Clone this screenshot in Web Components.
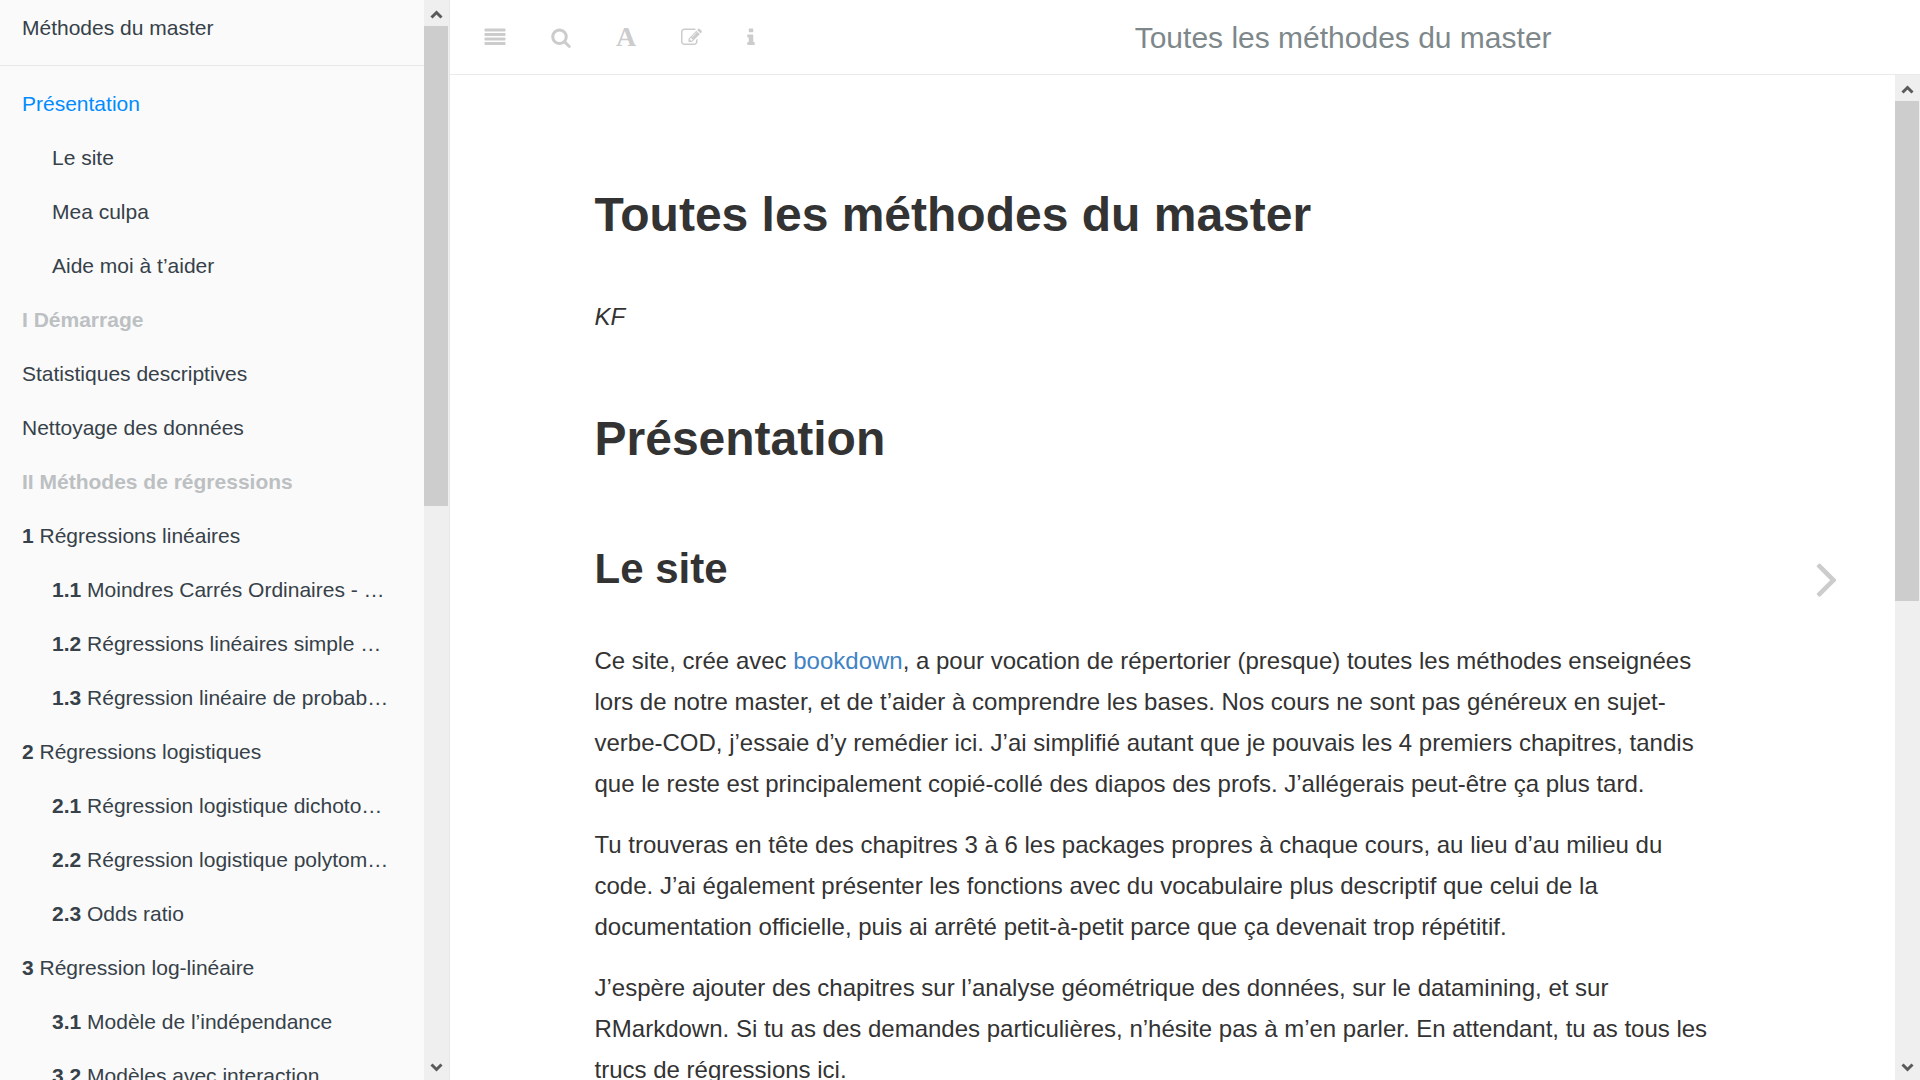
<!DOCTYPE html>
<html lang="fr">
<head>
<meta charset="utf-8">
<title>Toutes les méthodes du master</title>
<style>
  html, body { height: 100%; margin: 0; }
  body { font-family: "Liberation Sans", Arial, sans-serif; color: #333; background: #fff; overflow: hidden; }
</style>
</head>
<body>
<book-app>
  <book-summary slot="summary">
    <summary-item>Méthodes du master</summary-item>
    <summary-divider></summary-divider>
    <summary-item active>Présentation</summary-item>
    <summary-item level="2">Le site</summary-item>
    <summary-item level="2">Mea culpa</summary-item>
    <summary-item level="2">Aide moi à t’aider</summary-item>
    <summary-item part>I Démarrage</summary-item>
    <summary-item>Statistiques descriptives</summary-item>
    <summary-item>Nettoyage des données</summary-item>
    <summary-item part>II Méthodes de régressions</summary-item>
    <summary-item><b>1</b> Régressions linéaires</summary-item>
    <summary-item level="2"><b>1.1</b> Moindres Carrés Ordinaires - …</summary-item>
    <summary-item level="2"><b>1.2</b> Régressions linéaires simple …</summary-item>
    <summary-item level="2"><b>1.3</b> Régression linéaire de probab…</summary-item>
    <summary-item><b>2</b> Régressions logistiques</summary-item>
    <summary-item level="2"><b>2.1</b> Régression logistique dichoto…</summary-item>
    <summary-item level="2"><b>2.2</b> Régression logistique polytom…</summary-item>
    <summary-item level="2"><b>2.3</b> Odds ratio</summary-item>
    <summary-item><b>3</b> Régression log-linéaire</summary-item>
    <summary-item level="2"><b>3.1</b> Modèle de l’indépendance</summary-item>
    <summary-item level="2"><b>3.2</b> Modèles avec interaction</summary-item>
  </book-summary>
  <book-toolbar slot="toolbar">Toutes les méthodes du master</book-toolbar>
  <book-page slot="page"></book-page>
</book-app>

<script>
function define(name, html) {
  const template = document.createElement('template');
  template.innerHTML = html;
  customElements.define(name, class extends HTMLElement {
    constructor() {
      super();
      this.attachShadow({ mode: 'open' }).append(template.content.cloneNode(true));
    }
  });
}

define('book-app', `
  <style>
    :host { display: flex; height: 100vh; }
    .main { flex: 1; min-width: 0; display: flex; flex-direction: column; }
  </style>
  <slot name="summary"></slot>
  <div class="main"><slot name="toolbar"></slot><slot name="page"></slot></div>`);

/* Scroll bar with end arrows; --thumb is the share of the track that the thumb takes. */
define('scroll-rail', `
  <style>
    :host { display: flex; flex-direction: column; flex: none; width: 25px; background: #efefef; }
    svg { display: block; flex: none; width: 25px; height: 26px; fill: none; stroke: #5a5a5a; stroke-width: 3; }
    .track { flex: 1; padding-right: 1px; }
    .thumb { height: var(--thumb, 50%); background: #cdcdcd; }
  </style>
  <svg viewBox="0 0 25 26"><path d="M7.5 17.5l5-5 5 5"/></svg>
  <div class="track"><div class="thumb"></div></div>
  <svg viewBox="0 0 25 26"><path d="M7.5 10.5l5 5 5-5"/></svg>`);

define('book-summary', `
  <style>
    :host { display: flex; flex: none; box-sizing: border-box; width: 450px; background: #fafafa; border-right: 1px solid #e7e7e7; }
    nav { flex: 1; min-width: 0; padding-top: 1px; overflow: hidden; }
    scroll-rail { --thumb: 46.7%; }
  </style>
  <nav><slot></slot></nav>
  <scroll-rail></scroll-rail>`);

define('summary-item', `
  <style>
    :host { display: block; font-size: 21px; line-height: 24px; color: #364149; }
    a { display: block; padding: 15px 22px; color: inherit; text-decoration: none; white-space: nowrap; overflow: hidden; text-overflow: ellipsis; }
    :host([level="2"]) a { padding-left: 52px; }
    :host([active]) { color: #008cff; }
    :host([part]) { color: #bcc0c2; font-weight: bold; }
  </style>
  <a href="#"><slot></slot></a>`);

define('summary-divider', `
  <style>:host { display: block; height: 1px; margin: 10px 0 11px; background: #e7e7e7; }</style>`);

define('book-toolbar', `
  <style>
    :host { display: flex; align-items: stretch; gap: 1px; flex: none; box-sizing: border-box; height: 75px; padding: 0 12px; border-bottom: 1px solid #eaeaea; background: #fff; }
    button { display: flex; align-items: center; margin: 0; padding: 0 22px; border: 0; background: none; color: #ccc; font: 28px/28px "Liberation Serif", serif; cursor: pointer; }
    svg { display: block; height: 21px; fill: currentColor; }
    .letter { font-weight: bold; }
    h1 { flex: 1; margin: 0; text-align: center; font-size: 30px; font-weight: normal; line-height: 75px; color: #7e888b; }
  </style>
  <button aria-label="Sommaire"><svg width="22" viewBox="0 0 1792 1792"><path d="M64 128h1664q64 0 64 64v128q0 64-64 64h-1664q-64 0-64-64v-128q0-64 64-64zM64 512h1664q64 0 64 64v128q0 64-64 64h-1664q-64 0-64-64v-128q0-64 64-64zM64 896h1664q64 0 64 64v128q0 64-64 64h-1664q-64 0-64-64v-128q0-64 64-64zM64 1280h1664q64 0 64 64v128q0 64-64 64h-1664q-64 0-64-64v-128q0-64 64-64z"/></svg></button>
  <button aria-label="Rechercher"><svg width="20" viewBox="64 0 1664 1792"><path d="M1216 832q0-185-131.5-316.5t-316.5-131.5-316.5 131.5-131.5 316.5 131.5 316.5 316.5 131.5 316.5-131.5 131.5-316.5zm512 832q0 52-38 90t-90 38q-54 0-90-38l-343-342q-179 124-399 124-143 0-273.5-55.5t-225-150-150-225-55.5-273.5 55.5-273.5 150-225 225-150 273.5-55.5 273.5 55.5 225 150 150 225 55.5 273.5q0 220-124 399l343 343q37 37 37 90z"/></svg></button>
  <button class="letter" aria-label="Police">A</button>
  <button aria-label="Modifier"><svg width="21" viewBox="0 0 1792 1792"><path d="M888 1184l116-116-152-152-116 116v56h96v96h56zm440-720q-16-16-33 1l-350 350q-17 17-1 33t33-1l350-350q17-17 1-33zm80 594v190q0 119-84.5 203.5t-203.5 84.5h-832q-119 0-203.5-84.5t-84.5-203.5v-832q0-119 84.5-203.5t203.5-84.5h832q63 0 117 25 15 7 18 23 3 17-9 29l-49 49q-14 14-32 8-23-6-45-6h-832q-66 0-113 47t-47 113v832q0 66 47 113t113 47h832q66 0 113-47t47-113v-126q0-13 9-22l64-64q15-15 35-7t20 29zm-96-738l288 288-672 672h-288v-288zm444 132l-92 92-288-288 92-92q28-28 68-28t68 28l152 152q28 28 28 68t-28 68z"/></svg></button>
  <button aria-label="Informations"><svg width="8" viewBox="576 0 640 1792"><path d="M1216 1344v128q0 26-19 45t-45 19h-512q-26 0-45-19t-19-45v-128q0-26 19-45t45-19h64v-384h-64q-26 0-45-19t-19-45v-128q0-26 19-45t45-19h384q26 0 45 19t19 45v576h64q26 0 45 19t19 45zm-128-1152v192q0 26-19 45t-45 19h-256q-26 0-45-19t-19-45v-192q0-26 19-45t45-19h256q26 0 45 19t19 45z"/></svg></button>
  <h1><slot></slot></h1>`);

define('book-page', `
  <style>
    :host { position: relative; display: flex; flex: 1; min-height: 0; }
    main { flex: 1; min-width: 0; overflow: hidden; }
    article { box-sizing: border-box; max-width: 1200px; margin: 0 auto; padding: 99px 52px 0 22px; font-size: 24px; line-height: 41px; }
    h1, h2, p { margin: 0; }
    h1 { font-size: 48px; line-height: 82px; }
    h2 { font-size: 42px; line-height: 71px; margin: 53px 0 36px; }
    .author { margin: 40px 0 61px; }
    p + p { margin-top: 20px; }
    article a { color: #4183c4; text-decoration: none; }
    .next { position: absolute; top: 0; bottom: 0; right: 26px; width: 135px; display: flex; align-items: center; justify-content: center; }
    .next svg { width: 60px; height: 60px; fill: #ccc; }
    scroll-rail { --thumb: 52.5%; }
  </style>
  <main>
    <article>
      <h1>Toutes les méthodes du master</h1>
      <p class="author"><em>KF</em></p>
      <h1>Présentation</h1>
      <h2>Le site</h2>
      <p>Ce site, crée avec <a href="#">bookdown</a>, a pour vocation de répertorier (presque) toutes les méthodes enseignées lors de notre master, et de t’aider à comprendre les bases. Nos cours ne sont pas généreux en sujet-verbe-COD, j’essaie d’y remédier ici. J’ai simplifié autant que je pouvais les 4 premiers chapitres, tandis que le reste est principalement copié-collé des diapos des profs. J’allégerais peut-être ça plus tard.</p>
      <p>Tu trouveras en tête des chapitres 3 à 6 les packages propres à chaque cours, au lieu d’au milieu du code. J’ai également présenter les fonctions avec du vocabulaire plus descriptif que celui de la documentation officielle, puis ai arrêté petit-à-petit parce que ça devenait trop répétitif.</p>
      <p>J’espère ajouter des chapitres sur l’analyse géométrique des données, sur le datamining, et sur RMarkdown. Si tu as des demandes particulières, n’hésite pas à m’en parler. En attendant, tu as tous les trucs de régressions ici.</p>
    </article>
  </main>
  <scroll-rail></scroll-rail>
  <a class="next" href="#" aria-label="Page suivante"><svg viewBox="0 0 1792 1792"><path d="M1171 960q0 13-10 23l-466 466q-10 10-23 10t-23-10l-50-50q-10-10-10-23t10-23l393-393-393-393q-10-10-10-23t10-23l50-50q10-10 23-10t23 10l466 466q10 10 10 23z"/></svg></a>`);
</script>
</body>
</html>
